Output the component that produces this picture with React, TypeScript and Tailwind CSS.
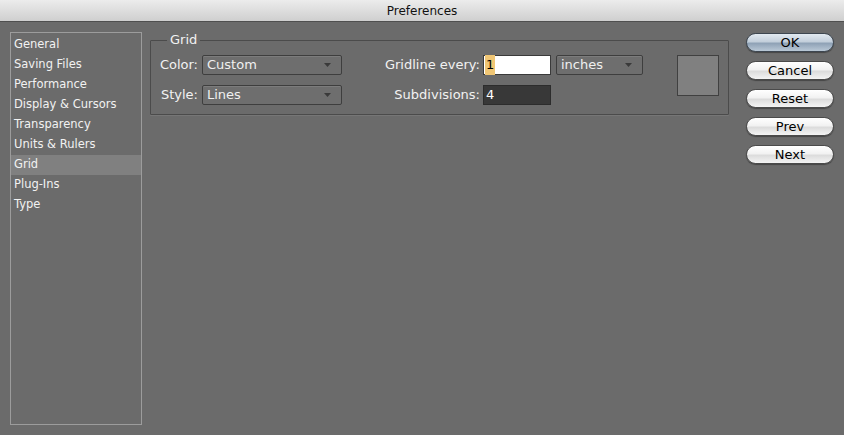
const items = [
  "General",
  "Saving Files",
  "Performance",
  "Display & Cursors",
  "Transparency",
  "Units & Rulers",
  "Grid",
  "Plug-Ins",
  "Type",
];

const font = { fontFamily: '"DejaVu Sans", "Liberation Sans", sans-serif' };

function Select({ value, width }: { value: string; width: string }) {
  return (
    <div
      className={`${width} h-[20px] flex items-center justify-between pl-[4px] pr-[10px] border border-[#3e3e3e] rounded-[2px] bg-[#6e6e6e] shadow-[inset_0_1px_0_#7c7c7c] text-[13px] text-[#f0f0f0]`}
    >
      <span>{value}</span>
      <svg width="7" height="4" viewBox="0 0 7 4">
        <path d="M0 0 L7 0 L3.5 4 Z" fill="#3a3a3a" />
      </svg>
    </div>
  );
}

function AquaButton({ label, primary }: { label: string; primary?: boolean }) {
  return (
    <button
      className={
        primary
          ? "w-[88px] h-[19px] rounded-full border border-[#3d4650] text-[13px] leading-none text-black bg-[linear-gradient(#e2e9f0_0%,#c3cfdb_45%,#8fa2b6_55%,#b9c8d6_100%)] shadow-[0_1px_1px_rgba(0,0,0,0.35)]"
          : "w-[88px] h-[19px] rounded-full border border-[#4a4a4a] text-[13px] leading-none text-black bg-[linear-gradient(#ffffff_0%,#f2f2f2_45%,#dcdcdc_55%,#f4f4f4_100%)] shadow-[0_1px_1px_rgba(0,0,0,0.35)]"
      }
    >
      {label}
    </button>
  );
}

export default function App() {
  return (
    <div className="w-[844px] h-[435px] bg-[#6b6b6b] flex flex-col overflow-hidden" style={font}>
      {/* title bar */}
      <div className="h-[22px] shrink-0 flex items-center justify-center border-b border-[#4f4f4f] bg-[linear-gradient(#ececec,#cfcfcf)] text-[12px] text-[#111]">
        Preferences
      </div>

      <div className="flex flex-1 pt-[10px] pl-[10px]">
        {/* category list */}
        <div className="w-[132px] h-[393px] border border-[#9c9c9c] pt-[2px]">
          {items.map((it) => (
            <div
              key={it}
              className={`h-[20px] flex items-center pl-[3px] text-[11.5px] text-[#f2f2f2] ${
                it === "Grid" ? "bg-[#808080]" : ""
              }`}
            >
              {it}
            </div>
          ))}
        </div>

        {/* grid group */}
        <div className="relative ml-[8px] mt-[8px] w-[579px] h-[75px] border border-[#4b4b4b] shadow-[0_1px_0_#767676] rounded-[1px]">
          <span className="absolute -top-[9px] left-[16px] px-[3px] bg-[#6b6b6b] text-[13px] leading-[16px] text-[#f2f2f2]">
            Grid
          </span>
          <div className="flex pt-[14px] pl-[7px]">
            <div className="flex flex-col gap-[10px]">
              <div className="flex items-center h-[20px]">
                <span className="w-[40px] text-right text-[13px] text-[#f2f2f2]">Color:</span>
                <div className="ml-[4px]">
                  <Select value="Custom" width="w-[140px]" />
                </div>
                <span className="w-[110px] ml-[28px] text-right text-[13px] text-[#f2f2f2] whitespace-nowrap">
                  Gridline every:
                </span>
                <div className="ml-[3px] w-[68px] h-[20px] flex items-center border border-[#3a3a3a] bg-white pl-[1px] text-[13px] text-black">
                  <span className="bg-[#f0c674] px-[1px]">1</span>
                </div>
                <div className="ml-[5px]">
                  <Select value="inches" width="w-[87px]" />
                </div>
              </div>
              <div className="flex items-center h-[20px]">
                <span className="w-[40px] text-right text-[13px] text-[#f2f2f2]">Style:</span>
                <div className="ml-[4px]">
                  <Select value="Lines" width="w-[140px]" />
                </div>
                <span className="w-[110px] ml-[28px] text-right text-[13px] text-[#f2f2f2]">
                  Subdivisions:
                </span>
                <div className="ml-[3px] w-[68px] h-[20px] flex items-center border border-[#2c2c2c] bg-[#383838] pl-[2px] text-[13px] text-white">
                  4
                </div>
              </div>
            </div>
            <div className="ml-[34px] w-[42px] h-[41px] border border-[#404040] bg-[#808080]" />
          </div>
        </div>

        {/* buttons */}
        <div className="ml-[17px] mt-[1px] flex flex-col gap-[9px]">
          <AquaButton label="OK" primary />
          <AquaButton label="Cancel" />
          <AquaButton label="Reset" />
          <AquaButton label="Prev" />
          <AquaButton label="Next" />
        </div>
      </div>
    </div>
  );
}
